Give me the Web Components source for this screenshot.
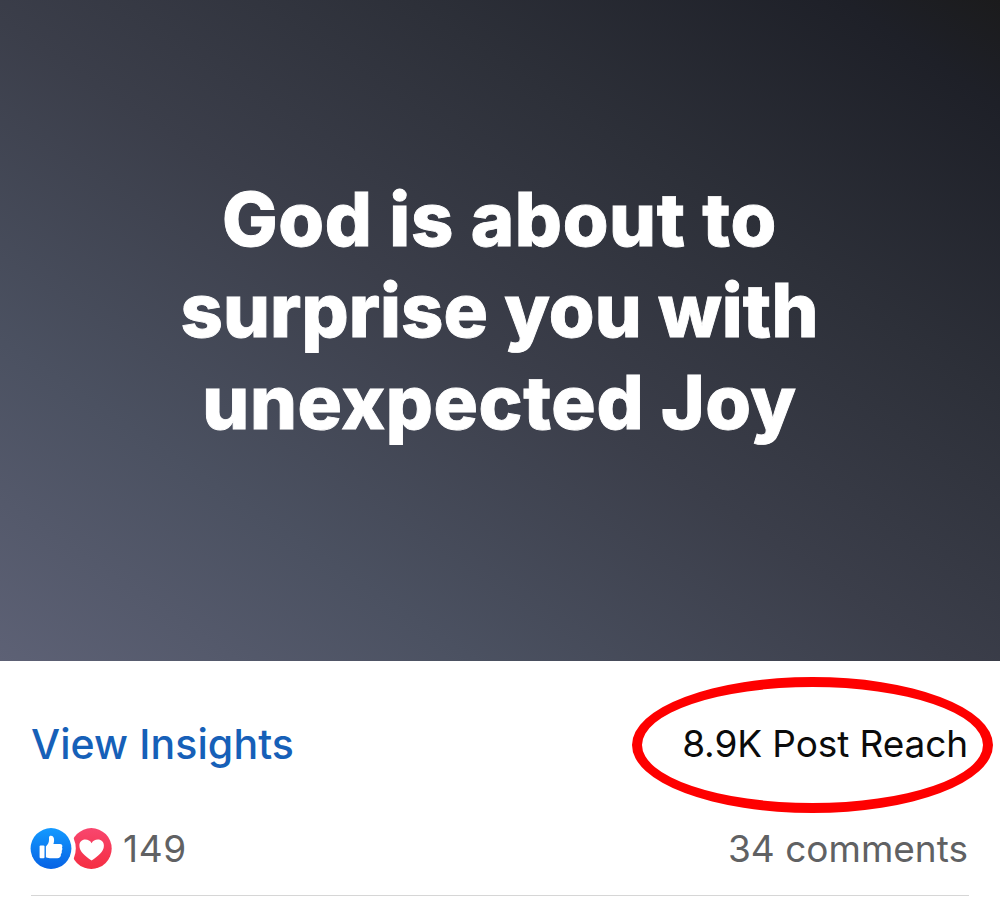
<!DOCTYPE html>
<html lang="en">
<head>
<meta charset="utf-8">
<title>Post</title>
<style>
  html, body { margin: 0; background: #fff; }
  body { font-family: Inter, "Liberation Sans", sans-serif; }
</style>
</head>
<body>
<social-post>
  <post-banner slot="banner">God is about to<br><span style="letter-spacing: var(--tight)">surprise you with</span><br>unexpected Joy</post-banner>
  <post-insights slot="insights" reach="8.9K Post Reach">View Insights</post-insights>
  <post-reactions slot="reactions" count="149">34 comments</post-reactions>
</social-post>

<script>
'use strict'

class Base extends HTMLElement {
  constructor () {
    super()
    this.root = this.attachShadow({ mode: 'open' })
    this.root.innerHTML = this.render()
  }

  render () { return '' }
}

customElements.define('social-post', class extends Base {
  render () {
    return `
    <style>
      :host {
        display: grid;
        grid-template-rows: 661px 165px 69px 2px;
        width: 1000px;
        height: 897px;
        overflow: hidden;
        background: #fff;
      }
      hr {
        margin: 0 31px;
        border: 0;
        height: 1px;
        background: #d6d6d6;
      }
    </style>
    <slot name="banner"></slot>
    <slot name="insights"></slot>
    <slot name="reactions"></slot>
    <hr>
    `
  }
})

customElements.define('post-banner', class extends Base {
  render () {
    return `
    <style>
      :host {
        --tight: 0.05px;
        display: flex;
        justify-content: center;
        box-sizing: border-box;
        padding: 174px 1px 0 0;
        background: linear-gradient(214deg, #1b1b1c 0%, #1e2028 8%, #2d3039 30%, #3b3e4a 52%, #4b5161 76%, #5d6175 100%);
        color: #fff;
        font-size: 74px;
        font-weight: 800;
        line-height: 91.4px;
        letter-spacing: 0.6px;
        text-align: center;
        white-space: nowrap;
        -webkit-text-stroke: 0.9px #fff;
      }
    </style>
    <div><slot></slot></div>
    `
  }
})

customElements.define('post-insights', class extends Base {
  static observedAttributes = ['reach']

  attributeChangedCallback (name, prev, value) {
    this.root.querySelector('#reach').textContent = value
  }

  render () {
    return `
    <style>
      :host {
        display: flex;
        justify-content: space-between;
        align-items: center;
        box-sizing: border-box;
        padding: 0 32px 0 31px;
      }
      a {
        color: #1660b8;
        font-size: 41px;
        font-weight: 500;
        letter-spacing: 0.1px;
      }
      .reach {
        color: #0b0b0b;
        font-size: 37px;
        letter-spacing: -0.1px;
      }
      .ring {
        position: absolute;
        left: 632px;
        top: 677px;
        width: 361px;
        height: 136px;
        box-sizing: border-box;
        border: 10px solid #fe0000;
        border-radius: 50%;
      }
    </style>
    <a><slot></slot></a>
    <span class="reach" id="reach"></span>
    <div class="ring"></div>
    `
  }
})

customElements.define('post-reactions', class extends Base {
  static observedAttributes = ['count']

  attributeChangedCallback (name, prev, value) {
    this.root.querySelector('#count').textContent = value
  }

  render () {
    return `
    <style>
      :host {
        display: flex;
        justify-content: space-between;
        align-items: center;
        box-sizing: border-box;
        padding: 0 32px 24px 30px;
        color: #606163;
        font-size: 37px;
      }
      .reactions {
        display: flex;
        align-items: center;
        gap: 10px;
      }
      #count { letter-spacing: 0.6px; }
      svg { display: block; }
    </style>
    <div class="reactions">
      <svg width="83" height="42" viewBox="0 0 83 42" fill="none" xmlns="http://www.w3.org/2000/svg">
        <defs>
          <linearGradient id="blue" x1="0" y1="0" x2="0" y2="1">
            <stop stop-color="#149aff"/>
            <stop offset="1" stop-color="#0762e4"/>
          </linearGradient>
          <linearGradient id="red" x1="0" y1="0" x2="0" y2="1">
            <stop stop-color="#f8466e"/>
            <stop offset="1" stop-color="#f52e42"/>
          </linearGradient>
        </defs>
        <circle cx="61.3" cy="20.5" r="20.4" fill="url(#red)"/>
        <circle cx="21" cy="20.5" r="24.8" fill="#fff"/>
        <circle cx="21" cy="20.5" r="20.4" fill="url(#blue)"/>
        <rect x="9.6" y="17.4" width="4.9" height="12.9" rx="1" fill="white"/>
        <path d="M15.9 18.4C18.2 16.2 19 14.4 19 11.8V9.6C19 8.2 19.8 7.7 20.9 7.7C23.1 7.7 24.1 9.6 24.1 12C24.1 13.6 23.8 15 23.4 16.1H29.9C32.2 16.1 33 18 32 19.6C32.6 20.7 32.4 22 31.7 22.9C32.1 24.2 31.7 25.3 30.9 26.1C31.2 28.6 29.8 30.3 27.2 30.3H21.5C19.3 30.3 17.6 30 15.9 29.3V18.4Z" fill="white"/>
        <path d="M61.6 32.4C55.4 28.3 49.4 23.7 49.4 17.7C49.4 14 51.9 11.6 55.3 11.6C58 11.6 60.4 12.9 61.6 15.3C62.8 12.9 65.1 11.6 67.9 11.6C71.3 11.6 73.9 14 73.9 17.7C73.9 23.7 67.8 28.3 61.6 32.4Z" fill="white"/>
      </svg>
      <span id="count"></span>
    </div>
    <span><slot></slot></span>
    `
  }
})
</script>
</body>
</html>
